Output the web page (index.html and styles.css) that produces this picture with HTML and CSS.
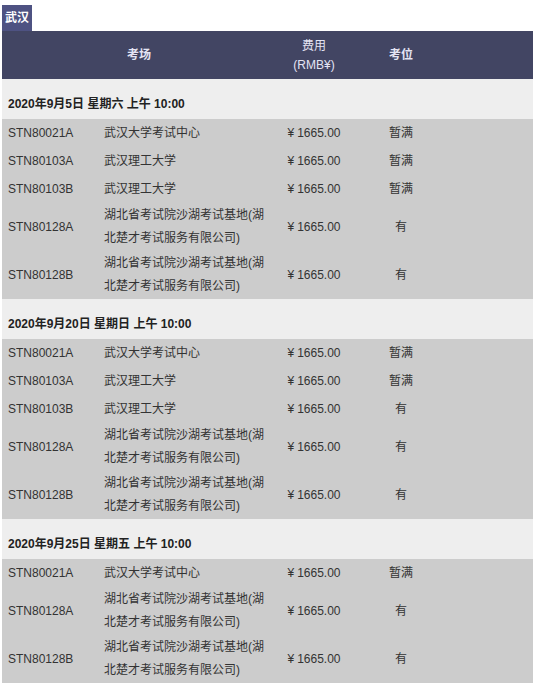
FILE: index.html
```html
<!DOCTYPE html>
<html lang="zh-CN">
<head>
<meta charset="utf-8">
<title>武汉</title>
<link rel="stylesheet" href="styles.css">
</head>
<body>
<div class="city"><span class="city-tag">武汉</span></div>
<table class="exam">
  <colgroup>
    <col class="c-id"><col class="c-venue"><col class="c-fee"><col class="c-seat"><col class="c-rest">
  </colgroup>
  <thead>
    <tr>
      <th colspan="2" class="bold">考场</th>
      <th class="fee-h">费用<br>(RMB¥)</th>
      <th class="bold">考位</th>
      <th></th>
    </tr>
  </thead>
  <tbody>
    <tr class="date"><td colspan="5">2020年9月5日 星期六 上午 10:00</td></tr>
    <tr><td class="id">STN80021A</td><td class="venue">武汉大学考试中心</td><td class="fee"><span class="yen">¥</span>1665.00</td><td class="seat">暂满</td><td></td></tr>
    <tr><td class="id">STN80103A</td><td class="venue">武汉理工大学</td><td class="fee"><span class="yen">¥</span>1665.00</td><td class="seat">暂满</td><td></td></tr>
    <tr><td class="id">STN80103B</td><td class="venue">武汉理工大学</td><td class="fee"><span class="yen">¥</span>1665.00</td><td class="seat">暂满</td><td></td></tr>
    <tr><td class="id">STN80128A</td><td class="venue">湖北省考试院沙湖考试基地(湖北楚才考试服务有限公司)</td><td class="fee"><span class="yen">¥</span>1665.00</td><td class="seat">有</td><td></td></tr>
    <tr><td class="id">STN80128B</td><td class="venue">湖北省考试院沙湖考试基地(湖北楚才考试服务有限公司)</td><td class="fee"><span class="yen">¥</span>1665.00</td><td class="seat">有</td><td></td></tr>

    <tr class="date"><td colspan="5">2020年9月20日 星期日 上午 10:00</td></tr>
    <tr><td class="id">STN80021A</td><td class="venue">武汉大学考试中心</td><td class="fee"><span class="yen">¥</span>1665.00</td><td class="seat">暂满</td><td></td></tr>
    <tr><td class="id">STN80103A</td><td class="venue">武汉理工大学</td><td class="fee"><span class="yen">¥</span>1665.00</td><td class="seat">暂满</td><td></td></tr>
    <tr><td class="id">STN80103B</td><td class="venue">武汉理工大学</td><td class="fee"><span class="yen">¥</span>1665.00</td><td class="seat">有</td><td></td></tr>
    <tr><td class="id">STN80128A</td><td class="venue">湖北省考试院沙湖考试基地(湖北楚才考试服务有限公司)</td><td class="fee"><span class="yen">¥</span>1665.00</td><td class="seat">有</td><td></td></tr>
    <tr><td class="id">STN80128B</td><td class="venue">湖北省考试院沙湖考试基地(湖北楚才考试服务有限公司)</td><td class="fee"><span class="yen">¥</span>1665.00</td><td class="seat">有</td><td></td></tr>

    <tr class="date"><td colspan="5">2020年9月25日 星期五 上午 10:00</td></tr>
    <tr><td class="id">STN80021A</td><td class="venue">武汉大学考试中心</td><td class="fee"><span class="yen">¥</span>1665.00</td><td class="seat">暂满</td><td></td></tr>
    <tr><td class="id">STN80128A</td><td class="venue">湖北省考试院沙湖考试基地(湖北楚才考试服务有限公司)</td><td class="fee"><span class="yen">¥</span>1665.00</td><td class="seat">有</td><td></td></tr>
    <tr><td class="id">STN80128B</td><td class="venue">湖北省考试院沙湖考试基地(湖北楚才考试服务有限公司)</td><td class="fee"><span class="yen">¥</span>1665.00</td><td class="seat">有</td><td></td></tr>
  </tbody>
</table>
</body>
</html>
```

FILE: styles.css
```css
html, body {
  margin: 0;
  background: #ffffff;
}
body {
  padding: 5px 2px 0 2px;
  font-family: "Liberation Sans", Arial, "Noto Sans CJK SC", sans-serif;
  font-size: 12px;
  color: #333333;
}
.city {
  display: flex;
}
.city-tag {
  display: block;
  width: 30px;
  height: 26px;
  line-height: 26px;
  text-align: center;
  background: #4e5282;
  color: #ffffff;
  font-weight: bold;
  font-size: 12px;
}
.exam {
  width: 531px;
  border-collapse: collapse;
  border-spacing: 0;
  table-layout: fixed;
}
.c-id { width: 96px; }
.c-venue { width: 178px; }
.c-fee { width: 76px; }
.c-seat { width: 98px; }
.c-rest { width: 83px; }

.exam thead tr {
  background: #424563;
  height: 48px;
}
.exam th {
  color: #e4e4f4;
  font-weight: normal;
  text-align: center;
  padding: 0;
  line-height: 19px;
}
.exam th.bold {
  font-weight: bold;
}
.exam th.fee-h {
  padding-top: 1px;
}
.exam tbody tr {
  background: #cccccc;
  height: 28px;
}
.exam td {
  padding: 1px 6px;
  line-height: 23px;
  vertical-align: middle;
}
.exam tr.date {
  background: #eeeeee;
  height: 40px;
}
.exam tr.date td {
  font-weight: bold;
  color: #222222;
  padding: 10px 6px 0 6px;
  line-height: 20px;
}
.exam td.fee, .exam td.seat {
  text-align: center;
  padding-left: 0;
  padding-right: 0;
}
.yen {
  margin-right: 3px;
}
.exam td.venue {
  padding-right: 4px;
}
```
